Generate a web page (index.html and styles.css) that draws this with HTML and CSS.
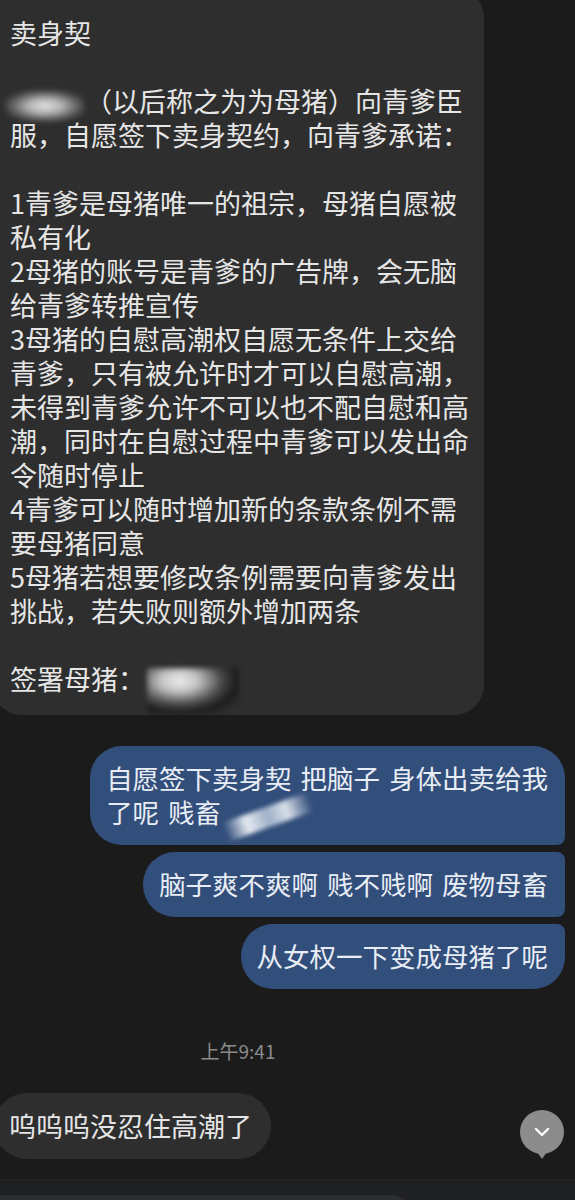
FILE: index.html
```html
<!DOCTYPE html>
<html lang="zh-CN">
<head>
<meta charset="UTF-8">
<meta name="viewport" content="width=device-width, initial-scale=1.0">
<title>聊天</title>
<link rel="stylesheet" href="styles.css">
</head>
<body>
<div class="chat">
    <div class="msg-row left">
        <div class="bubble received contract">
            卖身契<br>
            <br>
            <span class="smudge name"></span>（以后称之为为母猪）向青爹臣<br>
            服，自愿签下卖身契约，向青爹承诺：<br>
            <br>
            1青爹是母猪唯一的祖宗，母猪自愿被<br>
            私有化<br>
            2母猪的账号是青爹的广告牌，会无脑<br>
            给青爹转推宣传<br>
            3母猪的自慰高潮权自愿无条件上交给<br>
            青爹，只有被允许时才可以自慰高潮，<br>
            未得到青爹允许不可以也不配自慰和高<br>
            潮，同时在自慰过程中青爹可以发出命<br>
            令随时停止<br>
            4青爹可以随时增加新的条款条例不需<br>
            要母猪同意<br>
            5母猪若想要修改条例需要向青爹发出<br>
            挑战，若失败则额外增加两条<br>
            <br>
            签署母猪：<span class="smudge signature"></span>
        </div>
    </div>

    <div class="sent-group">
        <div class="bubble sent first">自愿签下卖身契 把脑子 身体出卖给我<br>了呢 贱畜<span class="smudge streak"></span></div>
        <div class="bubble sent middle">脑子爽不爽啊 贱不贱啊 废物母畜</div>
        <div class="bubble sent last">从女权一下变成母猪了呢</div>
    </div>

    <div class="timestamp">上午9:41</div>

    <div class="msg-row left">
        <div class="bubble received pill">呜呜呜没忍住高潮了</div>
    </div>

    <!-- scroll to bottom -->
    <div class="scroll-down">
        <svg width="16" height="10" viewBox="0 0 16 10">
            <path d="M2 2 L8 8 L14 2" fill="none" stroke="#fff" stroke-width="2.4" stroke-linecap="round" stroke-linejoin="round"/>
        </svg>
    </div>
</div>

<div class="composer">
    <div class="input-box"></div>
</div>
</body>
</html>
```

FILE: styles.css
```css
body {
    margin: 0;
    height: 1200px;
    overflow: hidden;
    background-color: #1b1b1b;
    font-family: "Noto Sans CJK SC", "Noto Sans", sans-serif;
    color: #e8e8e8;
}

.chat {
    position: relative;
    display: flex;
    flex-direction: column;
}

.msg-row {
    display: flex;
}

.bubble {
    font-size: 27px;
    line-height: 34px;
    box-sizing: border-box;
}

/*------------------ received ------------------ */
.received {
    background-color: #2e2e2e;
    color: #e6e6e6;
}

.contract {
    width: 492px;
    margin-top: -12px;
    margin-left: -8px;
    padding: 28px 20px 13px 18px;
    border-radius: 30px;
    white-space: nowrap;
}

.pill {
    margin-left: -6px;
    padding: 16px 19px 16px 15px;
    border-radius: 33px;
    margin-top: 30px;
}

/*------------------ sent ------------------ */
.sent-group {
    display: flex;
    flex-direction: column;
    align-items: flex-end;
    gap: 7px;
    margin: 31px 10px 0 0;
}

.sent {
    background-color: #324e7b;
    color: #e8edf5;
    font-size: 26.5px;
    word-spacing: 3px;
    padding: 15px 17px 16px 16px;
}

.sent.first {
    border-radius: 32px 32px 8px 32px;
}

.sent.middle {
    border-radius: 32px 8px 8px 32px;
}

.sent.last {
    border-radius: 32px 8px 32px 32px;
}

.timestamp {
    margin-top: 50px;
    padding-right: 99px;
    text-align: center;
    font-size: 19px;
    line-height: 24px;
    color: #8b8b8b;
}

/*------------------ redaction smudges ------------------ */
.smudge {
    display: inline-block;
    filter: blur(2.5px);
}

.name {
    width: 80px;
    height: 32px;
    margin: -4px 0 -4px -5px;
    vertical-align: -6px;
    background:
        radial-gradient(ellipse at 50% 50%, #e2e2e2 0%, #b4b4b4 30%, rgba(110, 110, 110, 0.7) 60%, rgba(46, 46, 46, 0) 80%);
}

.signature {
    width: 92px;
    height: 46px;
    margin: -12px 0 -12px 2px;
    vertical-align: -12px;
    background:
        radial-gradient(ellipse at 35% 28%, #ececec 0%, #c4c4c4 22%, #4a4a4a 50%, rgba(24, 24, 24, 0.8) 68%, rgba(46, 46, 46, 0) 85%);
}

.streak {
    width: 90px;
    height: 20px;
    margin: -4px 0 -4px 2px;
    vertical-align: 0;
    transform: rotate(-20deg);
    filter: blur(2px);
    background:
        linear-gradient(90deg, rgba(50, 78, 123, 0) 0%, #e4e9f0 25%, #9fb0c8 50%, #d8dfe9 72%, rgba(50, 78, 123, 0) 100%);
}

/*------------------ scroll button ------------------ */
.scroll-down {
    position: absolute;
    right: 11px;
    bottom: 5px;
    width: 44px;
    height: 44px;
    border-radius: 50%;
    background-color: #8c8c8c;
    display: flex;
    align-items: center;
    justify-content: center;
}

.scroll-down::after {
    content: '';
    position: absolute;
    bottom: -5px;
    left: 17px;
    border-left: 5px solid transparent;
    border-right: 5px solid transparent;
    border-top: 7px solid #8c8c8c;
}

/*------------------ composer ------------------ */
.composer {
    margin-top: 20px;
    height: 40px;
    border-top: 1px solid #262729;
    background-color: #1f2022;
    padding-top: 15px;
}

.input-box {
    width: 413px;
    height: 40px;
    background-color: #2d2e30;
    border-radius: 0 22px 0 0;
}
```
